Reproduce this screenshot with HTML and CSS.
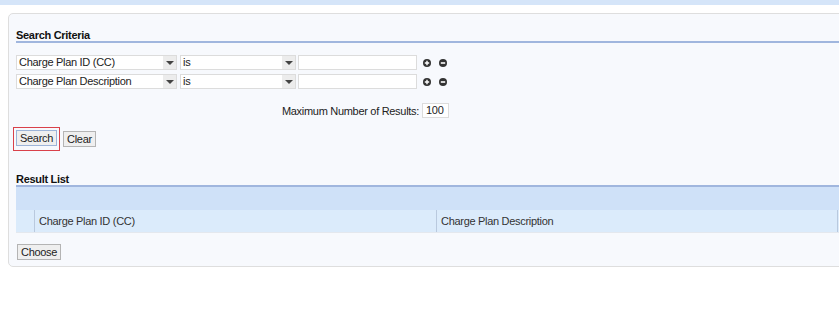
FILE: index.html
```html
<!DOCTYPE html>
<html>
<head>
<meta charset="utf-8">
<link rel="stylesheet" href="styles.css">
</head>
<body>
<div class="topbar"></div>
<div class="panel">
  <div class="heading">Search Criteria</div>
  <div class="criteria">
    <div class="row">
      <div class="sel sel-field"><span class="val">Charge Plan ID (CC)</span><span class="arrow"></span></div>
      <div class="sel sel-op"><span class="val">is</span><span class="arrow"></span></div>
      <div class="txt"></div>
      <span class="icon"><svg width="8" height="8" viewBox="0 0 8 8"><circle cx="4" cy="4" r="4" fill="#333"/><path d="M4 1.8v4.4M1.8 4h4.4" stroke="#fff" stroke-width="1.4"/></svg></span>
      <span class="icon"><svg width="8" height="8" viewBox="0 0 8 8"><circle cx="4" cy="4" r="4" fill="#333"/><path d="M1.8 4h4.4" stroke="#fff" stroke-width="1.6"/></svg></span>
    </div>
    <div class="row">
      <div class="sel sel-field"><span class="val">Charge Plan Description</span><span class="arrow"></span></div>
      <div class="sel sel-op"><span class="val">is</span><span class="arrow"></span></div>
      <div class="txt"></div>
      <span class="icon"><svg width="8" height="8" viewBox="0 0 8 8"><circle cx="4" cy="4" r="4" fill="#333"/><path d="M4 1.8v4.4M1.8 4h4.4" stroke="#fff" stroke-width="1.4"/></svg></span>
      <span class="icon"><svg width="8" height="8" viewBox="0 0 8 8"><circle cx="4" cy="4" r="4" fill="#333"/><path d="M1.8 4h4.4" stroke="#fff" stroke-width="1.6"/></svg></span>
    </div>
  </div>
  <div class="maxrow">
    <span class="label">Maximum Number of Results:</span>
    <div class="numbox">100</div>
  </div>
  <div class="buttons">
    <span class="focusring"><button class="btn btn-focus">Search</button></span>
    <button class="btn">Clear</button>
  </div>
  <div class="heading heading-result">Result List</div>
  <div class="grid">
    <div class="grid-top"></div>
    <div class="grid-head">
      <div class="cell cell-sel"></div>
      <div class="cell cell-id">Charge Plan ID (CC)</div>
      <div class="cell cell-desc">Charge Plan Description</div>
    </div>
  </div>
  <div class="footer">
    <button class="btn">Choose</button>
  </div>
</div>
</body>
</html>
```

FILE: styles.css
```css
html, body {
  margin: 0;
  padding: 0;
  background: #ffffff;
  font-family: "Liberation Sans", Arial, sans-serif;
  font-size: 11px;
  letter-spacing: -0.3px;
  color: #222;
  overflow: hidden;
}

.topbar {
  height: 5px;
  background: #d5e5f9;
}

.panel {
  margin: 8px -20px 0 8px;
  border: 1px solid #dedede;
  border-radius: 5px;
  background: #f7f9fd;
  padding: 0 0 6px 7px;
}

.heading {
  font-weight: bold;
  font-size: 11px;
  color: #111;
  padding: 16px 0 0 0;
  border-bottom: 2px solid #a0b6de;
  line-height: 11px;
}

.criteria {
  margin-top: 12px;
  display: flex;
  flex-direction: column;
  gap: 4px;
}

.row {
  display: flex;
  align-items: center;
  height: 15px;
}

.sel {
  display: flex;
  height: 15px;
  box-sizing: border-box;
  border: 1px solid #dcdcdc;
  background: #fff;
}

.sel .val {
  flex: 1;
  padding-left: 2px;
  line-height: 13px;
  color: #222;
}

.sel .arrow {
  width: 13px;
  background: #ececec;
  position: relative;
}

.sel .arrow::after {
  content: "";
  position: absolute;
  left: 3px;
  top: 5px;
  border-left: 4px solid transparent;
  border-right: 4px solid transparent;
  border-top: 4px solid #444;
}

.sel-field {
  width: 161px;
}

.sel-op {
  width: 116px;
  margin-left: 3px;
}

.txt {
  width: 119px;
  height: 15px;
  box-sizing: border-box;
  border: 1px solid #dcdcdc;
  background: #fff;
  margin-left: 2px;
}

.icon {
  display: inline-flex;
  margin-left: 6px;
}

.icon + .icon {
  margin-left: 8px;
}

.maxrow {
  margin-top: 14px;
  width: 433px;
  display: flex;
  justify-content: flex-end;
  align-items: center;
  gap: 3px;
}

.numbox {
  width: 27px;
  height: 15px;
  box-sizing: border-box;
  border: 1px solid #dcdcdc;
  background: #fff;
  line-height: 13px;
  padding-left: 3px;
}

.buttons {
  margin-top: 9px;
  display: flex;
  align-items: center;
  gap: 3px;
  margin-left: -3px;
}

.focusring {
  display: inline-flex;
  border: 1px solid #d9414a;
  padding: 2px 2px 4px 2px;
}

.btn {
  font-family: "Liberation Sans", Arial, sans-serif;
  font-size: 11px;
  letter-spacing: -0.3px;
  color: #222;
  background: #efefef;
  border: 1px solid #b4b4b4;
  padding: 0 3px;
  height: 16px;
  line-height: 14px;
  border-radius: 0;
}

.btn-focus {
  border-color: #9db4d8;
}

.heading-result {
  padding-top: 23px;
}

.grid-top {
  height: 23px;
  background: #cfe1f8;
}

.grid-head {
  display: flex;
  height: 22px;
  background: #dbebfb;
  border-bottom: 1px solid #e4e8ee;
}

.cell {
  line-height: 22px;
  color: #333;
  box-sizing: border-box;
}

.cell-sel {
  width: 19px;
  border-right: 1px solid #b9c9de;
}

.cell-id {
  width: 402px;
  padding-left: 4px;
  border-right: 1px solid #b9c9de;
}

.cell-desc {
  width: 401px;
  padding-left: 4px;
  border-right: 1px solid #b9c9de;
}

.footer {
  margin-top: 11px;
  margin-left: 1px;
}
```
